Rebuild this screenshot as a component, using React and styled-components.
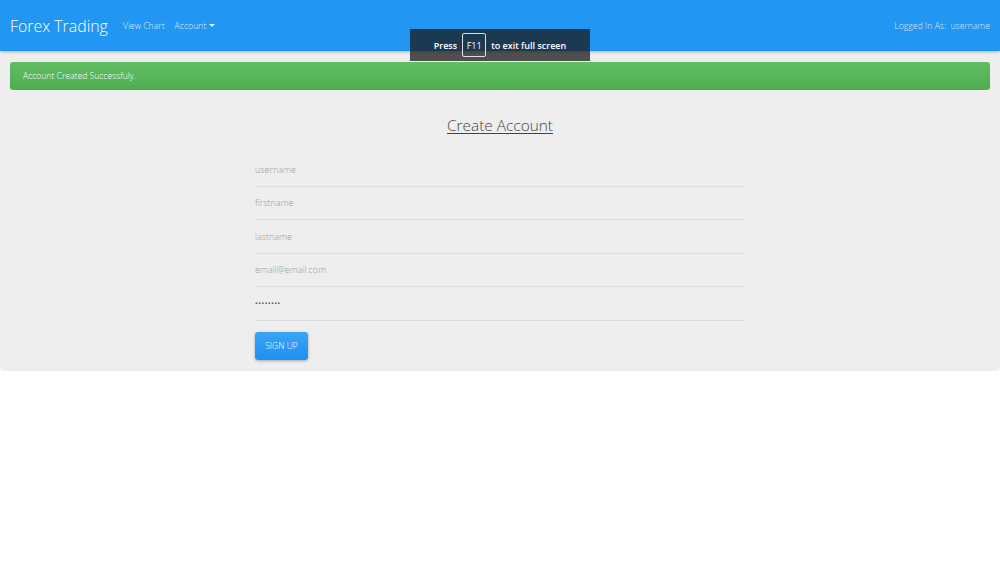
import React from "react";
import styled, { createGlobalStyle } from "styled-components";

const Global = createGlobalStyle`
  html, body { margin: 0; padding: 0; background: #fff; }
  body { font-family: "Open Sans", "Liberation Sans", sans-serif; font-size: 9.4px; color: #444; }
  * { box-sizing: border-box; }
`;

const Page = styled.div`
  position: relative;
  width: 1000px;
  min-height: 563px;
`;

const Navbar = styled.nav`
  height: 51px;
  background: #2196f3;
  display: flex;
  align-items: center;
  padding: 0 10px;
  box-shadow: 0 1px 3px rgba(0, 0, 0, 0.25);
  position: relative;
  z-index: 2;
`;

const Brand = styled.a`
  color: #fff;
  font-size: 15.9px;
  font-weight: 300;
  margin-right: 15px;
  text-decoration: none;
`;

const NavLinks = styled.div`
  display: flex;
  gap: 10px;
  align-items: center;
`;

const NavLink = styled.a`
  color: rgba(255, 255, 255, 0.85);
  font-size: 8.7px;
  font-weight: 300;
  display: flex;
  align-items: center;
  gap: 3px;
`;

const Caret = styled.span`
  width: 0;
  height: 0;
  border-left: 3px solid transparent;
  border-right: 3px solid transparent;
  border-top: 3px solid rgba(255, 255, 255, 0.9);
`;

const NavRight = styled.div`
  margin-left: auto;
  color: rgba(255, 255, 255, 0.8);
  font-size: 8.7px;
  font-weight: 300;
  white-space: pre;
`;

const Panel = styled.main`
  background: #eeeeee;
  padding: 11px 10px 11px;
  border-radius: 0 0 4px 4px;
`;

const Alert = styled.div`
  height: 28px;
  border-radius: 3px;
  background: linear-gradient(#62bd65, #4cae4f);
  color: #fff;
  font-size: 8.6px;
  font-weight: 300;
  display: flex;
  align-items: center;
  padding: 0 13px;
`;

const Title = styled.h1`
  margin: 25px 0 0;
  text-align: center;
  font-size: 15.4px;
  font-weight: 300;
  line-height: 22px;
  color: #444;
  span { text-decoration: underline; text-underline-offset: 2px; text-decoration-thickness: 1px; }
`;

const Form = styled.form`
  width: 490px;
  margin: 16px auto 0;
  display: flex;
  flex-direction: column;
`;

const Field = styled.input`
  height: 33.5px;
  border: none;
  border-bottom: 1px solid #dcdcdc;
  background: transparent;
  font-family: inherit;
  font-size: 9px;
  font-weight: 300;
  color: #555;
  padding: 0;
  outline: none;
  &::placeholder { color: #999; }
`;

const Dots = styled.div`
  height: 33.5px;
  border-bottom: 1px solid #dcdcdc;
  display: flex;
  align-items: center;
  font-size: 7px;
  letter-spacing: 0.6px;
  color: #555;
`;

const Button = styled.button`
  margin-top: 11px;
  align-self: flex-start;
  width: 53px;
  height: 28px;
  border: none;
  border-radius: 3px;
  background: linear-gradient(#3aa4f5, #1e8ff0);
  color: #fff;
  font-family: inherit;
  font-size: 8.6px;
  font-weight: 300;
  text-transform: uppercase;
  box-shadow: 0 1px 3px rgba(0, 0, 0, 0.3);
  padding: 0;
`;

const Overlay = styled.div`
  position: absolute;
  left: 410px;
  top: 29px;
  width: 180px;
  height: 32px;
  background: rgba(25, 25, 25, 0.75);
  color: #fff;
  z-index: 5;
  display: flex;
  align-items: center;
  justify-content: center;
  gap: 5px;
  font-size: 9px;
  font-weight: 600;
`;

const Key = styled.span`
  border: 1px solid #ddd;
  border-radius: 2px;
  width: 24px;
  height: 24px;
  display: flex;
  align-items: center;
  justify-content: center;
  font-weight: 500;
`;

export default function App() {
  return (
    <Page>
      <Global />
      <Navbar>
        <Brand>Forex Trading</Brand>
        <NavLinks>
          <NavLink>View Chart</NavLink>
          <NavLink>
            Account <Caret />
          </NavLink>
        </NavLinks>
        <NavRight>{"Logged In As:  username"}</NavRight>
      </Navbar>
      <Overlay>
        Press <Key>F11</Key> to exit full screen
      </Overlay>
      <Panel>
        <Alert>Account Created Successfuly.</Alert>
        <Title>
          <span>Create Account</span>
        </Title>
        <Form onSubmit={(e) => e.preventDefault()}>
          <Field placeholder="username" />
          <Field placeholder="firstname" />
          <Field placeholder="lastname" />
          <Field placeholder="email@email.com" />
          <Dots>••••••••</Dots>
          <Button type="submit">Sign Up</Button>
        </Form>
      </Panel>
    </Page>
  );
}
